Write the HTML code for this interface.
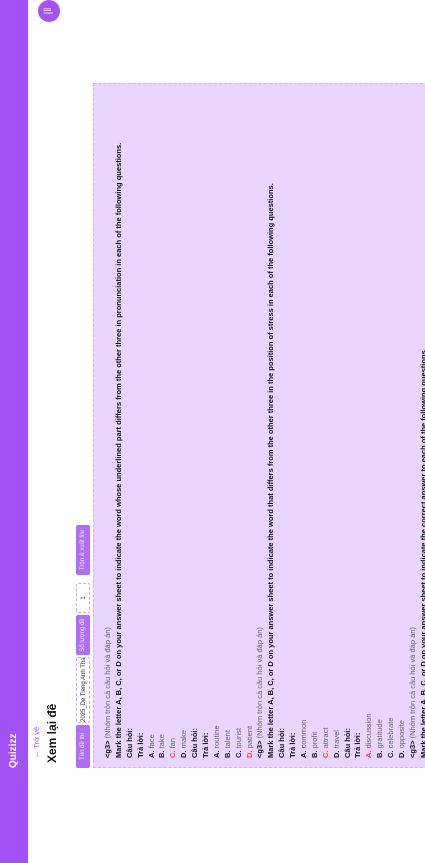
<!DOCTYPE html>
<html><head><meta charset="utf-8"><style>
html,body{margin:0;padding:0;width:425px;height:863px;overflow:hidden;background:#fff;font-family:"Liberation Sans","Noto Sans CJK SC",sans-serif}
#r{position:absolute;left:0;top:0;width:863px;height:425px;transform-origin:0 0;transform:translateY(863px) rotate(-90deg);background:#fff;overflow:hidden}
.hd{position:absolute;left:0;top:0;width:863px;height:28px;background:#a352f5}
.logo{position:absolute;left:95px;top:8px;color:#fff;font-weight:bold;font-size:10px}
.fab{position:absolute;left:841px;top:38px;width:22px;height:22px;border-radius:50%;background:#a352f5;color:#fff;font-size:10px;text-align:center;line-height:22px}
.back{position:absolute;left:105px;top:32px;color:#a352f5;font-size:7.5px}
.ttl{position:absolute;left:100px;top:45px;font-weight:bold;font-size:12px;color:#111}
.tag{position:absolute;top:76px;height:14px;line-height:14px;font-size:6px;text-align:center;box-sizing:border-box;border-radius:2px;overflow:hidden;white-space:nowrap}
.p{background:#b06ef7;color:#f3e8ff}
.in{background:#fff;border:1px dashed #c9a6f5;color:#333}
.box{position:absolute;left:95px;top:93px;width:685px;height:340px;background:#e9d5ff;border:1px dashed #d4b0fb;box-sizing:border-box;padding:9px 0 0 9px}
.l{font-size:7.5px;line-height:10.9px;height:10.9px;white-space:nowrap;color:#666}
.b{font-weight:bold;color:#111}
.k{font-weight:bold;color:#222}
.red{color:#ef4444;font-weight:bold}
</style></head><body><div id="r">
<div class="hd"><div class="logo">Quizizz</div></div>
<div class="fab">|‖</div>
<div class="back">← Trở về</div>
<div class="ttl">Xem lại đề</div>
<div class="tag p" style="left:95px;width:43px">Tên đề thi</div>
<div class="tag in" style="left:140px;width:66px">2025_De Tieng Anh Tham</div>
<div class="tag p" style="left:208px;width:40px">Số lượng đề</div>
<div class="tag in" style="left:250px;width:30px">1</div>
<div class="tag p" style="left:288px;width:50px">Trộn &amp; xuất file</div>
<div class="box">
<div class="l"><span class="b">&lt;g3&gt;</span> (Nhóm trộn cả câu hỏi và đáp án)</div>
<div class="l b">Mark the letter A, B, C, or D on your answer sheet to indicate the word whose underlined part differs from the other three in pronunciation in each of the following questions.</div>
<div class="l b">Câu hỏi:</div>
<div class="l b">Trả lời:</div>
<div class="l"><span class="k">A.</span> face</div>
<div class="l"><span class="k">B.</span> take</div>
<div class="l"><span class="red">C.</span> fan</div>
<div class="l"><span class="k">D.</span> make</div>
<div class="l b">Câu hỏi:</div>
<div class="l b">Trả lời:</div>
<div class="l"><span class="k">A.</span> routine</div>
<div class="l"><span class="k">B.</span> talent</div>
<div class="l"><span class="k">C.</span> tourist</div>
<div class="l"><span class="red">D.</span> patient</div>
<div class="l"><span class="b">&lt;g3&gt;</span> (Nhóm trộn cả câu hỏi và đáp án)</div>
<div class="l b">Mark the letter A, B, C, or D on your answer sheet to indicate the word that differs from the other three in the position of stress in each of the following questions.</div>
<div class="l b">Câu hỏi:</div>
<div class="l b">Trả lời:</div>
<div class="l"><span class="k">A.</span> common</div>
<div class="l"><span class="k">B.</span> profit</div>
<div class="l"><span class="red">C.</span> attract</div>
<div class="l"><span class="k">D.</span> travel</div>
<div class="l b">Câu hỏi:</div>
<div class="l b">Trả lời:</div>
<div class="l"><span class="red">A.</span> discussion</div>
<div class="l"><span class="k">B.</span> gratitude</div>
<div class="l"><span class="k">C.</span> celebrate</div>
<div class="l"><span class="k">D.</span> opposite</div>
<div class="l"><span class="b">&lt;g3&gt;</span> (Nhóm trộn cả câu hỏi và đáp án)</div>
<div class="l b">Mark the letter A, B, C, or D on your answer sheet to indicate the correct answer to each of the following questions.</div>
</div>
</div></body></html>
